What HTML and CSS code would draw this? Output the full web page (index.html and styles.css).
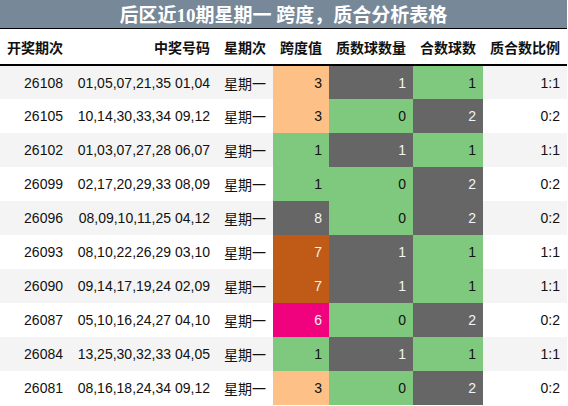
FILE: index.html
```html
<!DOCTYPE html>
<html lang="zh">
<head>
<meta charset="utf-8">
<link rel="stylesheet" href="styles.css">
</head>
<body>
<div class="sheet">
  <div class="title">后区近10期星期一 跨度，质合分析表格</div>
  <table class="grid">
    <colgroup>
      <col class="c1"><col class="c2"><col class="c3"><col class="c4"><col class="c5"><col class="c6"><col class="c7">
    </colgroup>
    <thead>
      <tr><th>开奖期次</th><th>中奖号码</th><th>星期次</th><th>跨度值</th><th>质数球数量</th><th>合数球数</th><th>质合数比例</th></tr>
    </thead>
    <tbody>
      <tr><td>26108</td><td>01,05,07,21,35 01,04</td><td>星期一</td><td class="peach">3</td><td class="dark">1</td><td class="green">1</td><td>1:1</td></tr>
      <tr><td>26105</td><td>10,14,30,33,34 09,12</td><td>星期一</td><td class="peach">3</td><td class="green">0</td><td class="dark">2</td><td>0:2</td></tr>
      <tr><td>26102</td><td>01,03,07,27,28 06,07</td><td>星期一</td><td class="green">1</td><td class="dark">1</td><td class="green">1</td><td>1:1</td></tr>
      <tr><td>26099</td><td>02,17,20,29,33 08,09</td><td>星期一</td><td class="green">1</td><td class="green">0</td><td class="dark">2</td><td>0:2</td></tr>
      <tr><td>26096</td><td>08,09,10,11,25 04,12</td><td>星期一</td><td class="dark">8</td><td class="green">0</td><td class="dark">2</td><td>0:2</td></tr>
      <tr><td>26093</td><td>08,10,22,26,29 03,10</td><td>星期一</td><td class="brown">7</td><td class="dark">1</td><td class="green">1</td><td>1:1</td></tr>
      <tr><td>26090</td><td>09,14,17,19,24 02,09</td><td>星期一</td><td class="brown">7</td><td class="dark">1</td><td class="green">1</td><td>1:1</td></tr>
      <tr><td>26087</td><td>05,10,16,24,27 04,10</td><td>星期一</td><td class="pink">6</td><td class="green">0</td><td class="dark">2</td><td>0:2</td></tr>
      <tr><td>26084</td><td>13,25,30,32,33 04,05</td><td>星期一</td><td class="green">1</td><td class="dark">1</td><td class="green">1</td><td>1:1</td></tr>
      <tr><td>26081</td><td>08,16,18,24,34 09,12</td><td>星期一</td><td class="peach">3</td><td class="green">0</td><td class="dark">2</td><td>0:2</td></tr>
    </tbody>
  </table>
</div>
</body>
</html>
```

FILE: styles.css
```css
html, body {
  margin: 0;
  padding: 0;
  background: #ffffff;
}
.sheet {
  width: 567px;
  font-family: "Liberation Sans", "Noto Sans CJK SC", sans-serif;
  font-size: 14px;
  color: #111;
}
.title {
  height: 28px;
  line-height: 31px;
  background: #778899;
  color: #ffffff;
  text-align: center;
  font-family: "Liberation Serif", "Noto Sans CJK SC", serif;
  font-weight: bold;
  font-size: 19px;
  border-bottom: 1px solid #000;
  box-sizing: content-box;
}
.grid {
  width: 567px;
  table-layout: fixed;
  border-collapse: collapse;
  border-spacing: 0;
}
.c1 { width: 70px; }
.c2 { width: 147px; }
.c3 { width: 56px; }
.c4 { width: 56px; }
.c5 { width: 84px; }
.c6 { width: 70px; }
.c7 { width: 84px; }
.grid th, .grid td {
  height: 34px;
  padding: 0 7px 0 0;
  text-align: right;
  vertical-align: middle;
  white-space: nowrap;
  box-sizing: border-box;
}
.grid th {
  font-weight: bold;
  border-bottom: 2px solid #000;
  height: 36px;
  padding-top: 1px;
}
.grid tbody tr:nth-child(odd) { background: #f4f4f4; }
.grid tbody tr:nth-child(even) { background: #ffffff; }
.grid td.peach { background: #fdc086; }
.grid td.green { background: #7fc97f; }
.grid td.dark { background: #666666; color: #f4f4f4; }
.grid td.brown { background: #bf5b17; color: #f4f4f4; }
.grid td.pink { background: #f0027f; color: #f4f4f4; }
```
